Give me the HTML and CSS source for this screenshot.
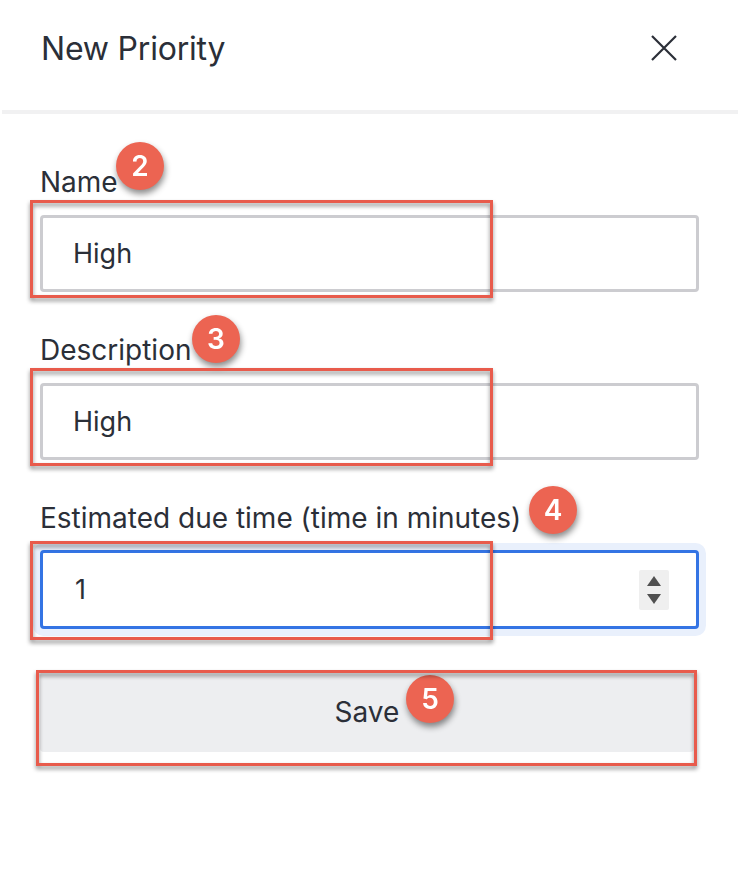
FILE: index.html
```html
<!DOCTYPE html>
<html>
<head>
<meta charset="utf-8">
<link rel="stylesheet" href="styles.css">
</head>
<body>
<div class="modal">
  <header class="modal-header">
    <h1 class="modal-title">New Priority</h1>
    <button class="close-btn" aria-label="Close">
      <svg width="26" height="26" viewBox="0 0 26 26"><path d="M1 1 L25 25 M25 1 L1 25" stroke="#2b2f38" stroke-width="2.2" fill="none"/></svg>
    </button>
  </header>
  <div class="divider"></div>
  <form class="form">
    <div class="field">
      <label class="label">Name<span class="badge b-name">2</span></label>
      <div class="input-box">
        <input class="input" type="text" value="High">
      </div>
      <div class="mark mark-input"></div>
    </div>
    <div class="field">
      <label class="label">Description<span class="badge b-desc">3</span></label>
      <div class="input-box">
        <input class="input" type="text" value="High">
      </div>
      <div class="mark mark-input"></div>
    </div>
    <div class="field">
      <label class="label">Estimated due time (time in minutes)<span class="badge b-time">4</span></label>
      <div class="input-box focused">
        <input class="input num" type="text" value="1">
        <div class="spinner">
          <svg width="16" height="12" viewBox="0 0 16 12"><path d="M8 1 L15 11 L1 11 Z" fill="#505050"/></svg>
          <svg width="16" height="12" viewBox="0 0 16 12"><path d="M1 1 L15 1 L8 11 Z" fill="#505050"/></svg>
        </div>
      </div>
      <div class="mark mark-input mark-focus"></div>
    </div>
    <div class="save-wrap">
      <button class="save" type="button">Save<span class="badge b-save">5</span></button>
      <div class="mark mark-save"></div>
    </div>
  </form>
</div>
</body>
</html>
```
FILE: styles.css
```css
* { box-sizing: border-box; }
html, body { margin: 0; padding: 0; background: #fff; }
body {
  font-family: Inter, "Noto Sans", sans-serif;
  color: #2b2f38;
  width: 738px;
  height: 892px;
  overflow: hidden;
}
.modal { width: 738px; }
.modal-header {
  height: 110px;
  display: flex;
  align-items: center;
  justify-content: space-between;
  padding: 0 61px 14px 41px;
}
.modal-title {
  margin: 0;
  font-size: 32px;
  font-weight: 400;
  letter-spacing: -0.2px;
  color: #2b2f38;
}
.close-btn {
  border: 0;
  background: none;
  padding: 0;
  width: 26px;
  height: 26px;
  display: flex;
}
.divider {
  height: 4px;
  margin-left: 2px;
  background: #f1f1f2;
}
.form {
  padding: 53px 39px 0 40px;
  display: flex;
  flex-direction: column;
}
.field {
  position: relative;
  margin-bottom: 43px;
}
.label {
  position: relative;
  display: inline-block;
  font-size: 28px;
  line-height: 30px;
  height: 30px;
  margin-bottom: 18px;
  color: #2b2f38;
}
.input-box {
  height: 77px;
  border: 3px solid #ccccd0;
  border-radius: 4px;
  display: flex;
  align-items: center;
  background: #fff;
}
.input-box.focused {
  border-color: #3474e4;
  box-shadow: 0 0 0 7px #e9f0fc;
  height: 79px;
  margin-top: -1px;
}
.input {
  flex: 1;
  border: 0;
  outline: none;
  background: transparent;
  font-family: Inter, "Noto Sans", sans-serif;
  font-size: 27px;
  color: #2b2f38;
  padding: 0 0 0 30px;
  height: 100%;
  min-width: 0;
}
.input.num { padding-left: 32px; }
.spinner {
  width: 30px;
  height: 40px;
  margin-right: 27px;
  background: #efefef;
  border-radius: 2px;
  display: flex;
  flex-direction: column;
  align-items: center;
  justify-content: center;
  gap: 6px;
}
.spinner svg { display: block; }
.badge {
  position: absolute;
  width: 48px;
  height: 48px;
  border-radius: 50%;
  background: #ec6452;
  color: #fff;
  font-family: Inter, "Noto Sans", sans-serif;
  font-weight: 600;
  font-size: 28px;
  line-height: 48px;
  text-align: center;
  filter: drop-shadow(1px 4px 3px rgba(0,0,0,0.45));
}
.b-name { left: 76px; top: -25px; }
.b-desc { left: 152px; top: -20px; }
.b-time { left: 489px; top: -17px; }
.mark {
  position: absolute;
  border: 3px solid #e85b4c;
  filter: drop-shadow(0 3px 2px rgba(0,0,0,0.45));
  pointer-events: none;
}
.mark-input {
  left: -10px;
  top: 33px;
  width: 463px;
  height: 98px;
}
.mark-focus { top: 38px; height: 99px; }
.save-wrap { position: relative; }
.save {
  position: relative;
  width: 654px;
  height: 80px;
  border: 0;
  border-radius: 4px;
  background: #edeef0;
  font-family: Inter, "Noto Sans", sans-serif;
  font-size: 28px;
  color: #2b2f38;
  padding: 0;
}
.b-save { left: 366px; top: 3px; }
.mark-save {
  left: -4px;
  top: -2px;
  width: 661px;
  height: 96px;
}
```
